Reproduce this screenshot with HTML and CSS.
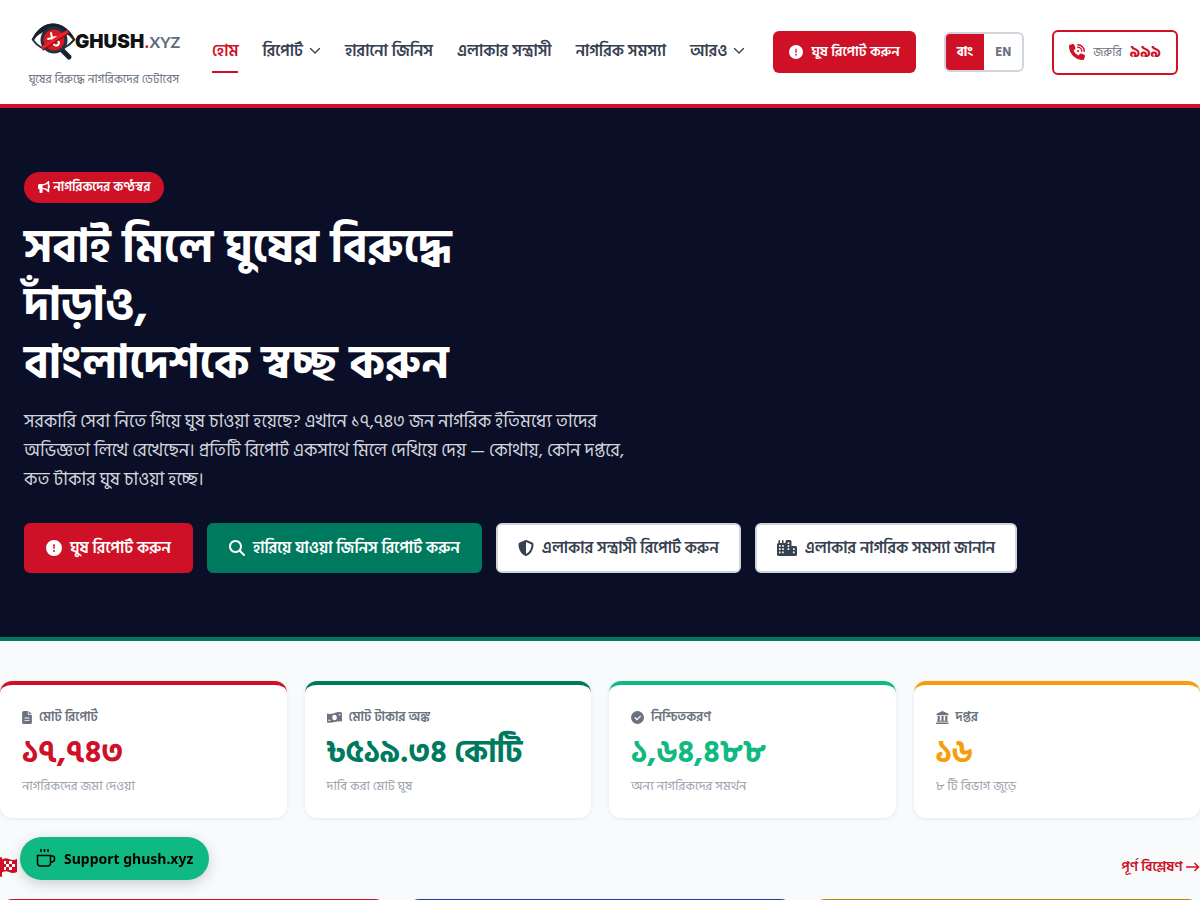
FILE: index.html
```html
<!DOCTYPE html>
<html lang="bn">

<head>
    <meta charset="UTF-8">
    <meta name="viewport" content="width=device-width, initial-scale=1">
    <title>GHUSH.XYZ</title>
    <link rel="stylesheet" href="styles.css">
</head>

<body>

    <!-- shared icons -->
    <svg class="sprite" aria-hidden="true">
        <symbol id="i-alert" viewBox="0 0 512 512">
            <path fill-rule="evenodd" d="M256 512A256 256 0 1 0 256 0a256 256 0 1 0 0 512zm0-384c13.300 0 24 10.700 24 24V264c0 13.300-10.700 24-24 24s-24-10.700-24-24V152c0-13.300 10.700-24 24-24zM224 352a32 32 0 1 1 64 0 32 32 0 1 1-64 0z" />
        </symbol>
        <symbol id="i-chevron" viewBox="0 0 12 8">
            <path d="M1.500 1.500L6 6l4.500-4.500" fill="none" stroke="currentColor" stroke-width="1.400" stroke-linecap="round" stroke-linejoin="round" />
        </symbol>
    </svg>

    <header class="header">
        <a class="brand" href="#">
            <svg class="logo" viewBox="0 0 160 50" role="img" aria-label="GHUSH.XYZ">
                <path d="M9 25C17 11 37 7 50 25C38 39 18 38 9 25z" fill="#fff" stroke="#26313d" stroke-width="2" stroke-linejoin="round" />
                <path d="M8 25C17 4 40 3 51 25C40 12 20 11 8 25z" fill="#17202b" stroke="#17202b" stroke-linejoin="round" />
                <path d="M37 34l8 8" stroke="#17202b" stroke-width="5" stroke-linecap="round" />
                <circle cx="30" cy="25" r="12" fill="#d71920" stroke="#26313d" stroke-width="3" />
                <path d="M27 18l2 9q1 5 5 3q2-2 0-4M24 24l8-2" fill="none" stroke="#fff" stroke-width="2" stroke-linecap="round" />
                <path d="M18 34L44 17" stroke="#8d1017" stroke-width="4" />
                <path d="M18 33L44 16" stroke="#e8232b" stroke-width="3" />
                <text class="logo-name" x="51" y="33">GHUSH<tspan class="logo-dot">.</tspan><tspan class="logo-xyz">XYZ</tspan></text>
            </svg>
            <span class="tagline">ঘুষের বিরুদ্ধে নাগরিকদের ডেটাবেস</span>
        </a>

        <nav class="nav">
            <a class="active" href="#">হোম</a>
            <a href="#">রিপোর্ট <svg class="chevron"><use href="#i-chevron" /></svg></a>
            <a href="#">হারানো জিনিস</a>
            <a href="#">এলাকার সন্ত্রাসী</a>
            <a href="#">নাগরিক সমস্যা</a>
            <a href="#">আরও <svg class="chevron"><use href="#i-chevron" /></svg></a>
        </nav>

        <a class="header-report" href="#"><svg class="icon14"><use href="#i-alert" /></svg>ঘুষ রিপোর্ট করুন</a>

        <div class="lang">
            <button class="on" type="button">বাং</button>
            <button type="button">EN</button>
        </div>

        <a class="emergency" href="#">
            <svg class="icon16" viewBox="0 0 512 512">
                <path d="M164.900 24.600c-7.700-18.600-28-28.500-47.400-23.200l-88 24C12.100 30.200 0 46 0 64C0 311.400 200.600 512 448 512c18 0 33.800-12.100 38.600-29.500l24-88c5.300-19.400-4.600-39.700-23.200-47.400l-96-40c-16.300-6.800-35.200-2.100-46.300 11.600L304.700 368C234.300 334.700 177.300 277.700 144 207.300L193.300 167c13.700-11.200 18.400-30 11.600-46.300l-40-96z" />
                <path d="M280 24a208 208 0 0 1 208 208M280 104a128 128 0 0 1 128 128" fill="none" stroke="currentColor" stroke-width="46" stroke-linecap="round" />
                <circle cx="290" cy="222" r="34" />
            </svg>
            <span>জরুরি</span>
            <strong>৯৯৯</strong>
        </a>
    </header>

    <section class="hero">
        <span class="badge">
            <svg class="icon12" viewBox="0 0 512 512"><path fill-rule="evenodd" d="M480 32c0-12.900-7.800-24.600-19.800-29.600s-25.700-2.200-34.900 6.900L381.700 53c-48 48-113.100 75-181 75H64c-35.300 0-64 28.700-64 64v96c0 35.300 28.700 64 64 64v128c0 17.700 14.300 32 32 32h64c17.700 0 32-14.300 32-32V352h8.700c67.900 0 133 27 181 75l43.600 43.600c9.200 9.200 22.900 11.900 34.900 6.900s19.800-16.600 19.800-29.600V300.400c18.600-8.800 32-32.500 32-60.400s-13.400-51.600-32-60.400V32zm-64 76.700V371.300C357.200 317.800 280.500 288 200.700 288H192V192h8.700c79.800 0 156.500-29.800 215.300-83.300z" /></svg>
            নাগরিকদের কণ্ঠস্বর
        </span>
        <h1>সবাই মিলে ঘুষের বিরুদ্ধে দাঁড়াও,<br>বাংলাদেশকে স্বচ্ছ করুন</h1>
        <p>সরকারি সেবা নিতে গিয়ে ঘুষ চাওয়া হয়েছে? এখানে ১৭,৭৪৩ জন নাগরিক ইতিমধ্যে তাদের অভিজ্ঞতা লিখে রেখেছেন। প্রতিটি রিপোর্ট একসাথে মিলে দেখিয়ে দেয় — কোথায়, কোন দপ্তরে, কত টাকার ঘুষ চাওয়া হচ্ছে।</p>
        <div class="actions">
            <a class="btn red" href="#"><svg class="icon16"><use href="#i-alert" /></svg>ঘুষ রিপোর্ট করুন</a>
            <a class="btn green" href="#">
                <svg class="icon16" viewBox="0 0 512 512"><path fill-rule="evenodd" d="M416 208c0 45.900-14.900 88.300-40 122.700L502.600 457.400c12.500 12.500 12.500 32.800 0 45.300s-32.800 12.500-45.300 0L330.700 376c-34.400 25.200-76.800 40-122.700 40C93.100 416 0 322.900 0 208S93.100 0 208 0S416 93.100 416 208zM208 352a144 144 0 1 0 0-288 144 144 0 1 0 0 288z" /></svg>
                হারিয়ে যাওয়া জিনিস রিপোর্ট করুন
            </a>
            <a class="btn white" href="#">
                <svg class="icon16" viewBox="0 0 512 512"><path fill-rule="evenodd" d="M256 0c4.600 0 9.200 1 13.400 2.900L457.700 82.800c22 9.300 38.400 31 38.300 57.200c-.5 99.200-41.300 280.700-213.600 363.200c-16.700 8-36.100 8-52.800 0C57.300 420.700 16.500 239.200 16 140c-.1-26.200 16.300-47.900 38.300-57.200L242.700 2.900C246.800 1 251.400 0 256 0zm0 66.800V444.800C394 378 431.100 230.100 432 141.400L256 66.800z" /></svg>
                এলাকার সন্ত্রাসী রিপোর্ট করুন
            </a>
            <a class="btn white" href="#">
                <svg class="icon-city" viewBox="0 0 640 512"><path fill-rule="evenodd" d="M48 24a24 24 0 0 1 48 0v72h64V24a24 24 0 0 1 48 0v72h64V48a48 48 0 0 1 48-48h96a48 48 0 0 1 48 48v144h128a48 48 0 0 1 48 48v224a48 48 0 0 1-48 48H48a48 48 0 0 1-48-48V144a48 48 0 0 1 48-48zM64 160v56h52v-56zM164 160v56h52v-56zM64 264v56h52v-56zM164 264v56h52v-56zM64 368v56h52v-56zM164 368v56h52v-56zM340 72v56h52v-56zM340 168v56h52v-56zM340 264v56h52v-56zM512 264v56h52v-56zM512 368v56h52v-56z" /></svg>
                এলাকার নাগরিক সমস্যা জানান
            </a>
        </div>
    </section>

    <main>
        <section class="stats">
            <div class="stat red-stat">
                <div class="label"><svg class="icon-file" viewBox="0 0 384 512"><path fill-rule="evenodd" d="M64 0C28.700 0 0 28.700 0 64V448c0 35.300 28.700 64 64 64H320c35.300 0 64-28.700 64-64V160H256c-17.700 0-32-14.300-32-32V0H64zM256 0V128H384zM96 256v36h192v-36zM96 352v36h192v-36z" /></svg>মোট রিপোর্ট</div>
                <div class="number">১৭,৭৪৩</div>
                <div class="note">নাগরিকদের জমা দেওয়া</div>
            </div>
            <div class="stat green-stat">
                <div class="label"><svg class="icon-money" viewBox="0 0 30 24"><path fill-rule="evenodd" d="M0 4Q7 6 15 3T30 2V20Q23 19 15 21T0 22zM15 6.500a4.500 5.500 0 1 0 0 11a4.500 5.500 0 1 0 0-11zM3 16v3q3 0 4-1q-1-2-4-2zM27 8V5q-3 0-4 1q1 2 4 2z" /></svg>মোট টাকার অঙ্ক</div>
                <div class="number">৳৫১৯.৩৪ কোটি</div>
                <div class="note">দাবি করা মোট ঘুষ</div>
            </div>
            <div class="stat mint-stat">
                <div class="label"><svg class="icon13" viewBox="0 0 24 24"><circle cx="12" cy="12" r="12" /><path d="M7 12l4 4 7-7" fill="none" stroke="#fff" stroke-width="2.500" /></svg>নিশ্চিতকরণ</div>
                <div class="number">১,৬৪,৪৮৮</div>
                <div class="note">অন্য নাগরিকদের সমর্থন</div>
            </div>
            <div class="stat gold-stat">
                <div class="label"><svg class="icon13" viewBox="0 0 24 24"><path d="M12 0l11 5v3H1V5zM3 9h4v9h3V9h4v9h3V9h4v9h1v2H2v-2h1zM1 21h22v3H0v-2z" /></svg>দপ্তর</div>
                <div class="number">১৬</div>
                <div class="note">৮ টি বিভাগ জুড়ে</div>
            </div>
        </section>

        <section class="analysis">
            <div class="analysis-head">
                <svg class="flag" viewBox="0 0 18 20">
                    <path d="M1 1v18" stroke="currentColor" stroke-width="2" stroke-linecap="round" />
                    <path d="M1 3q4-3 8-1t8 0v13q-4 2-8 0t-8 1z" />
                    <path d="M4 4h2v3H4zM9 4h3v3H9zM6 7h3v3H6zM12 7h3v3h-3zM4 10h2v3H4zM9 10h3v3H9z" fill="#fff" />
                </svg>
                <a href="#">পূর্ণ বিশ্লেষণ <svg class="arrow" viewBox="0 0 14 12"><path d="M0 6h12.500M8.500 2l4 4-4 4" fill="none" stroke="currentColor" stroke-width="1.500" /></svg></a>
            </div>
            <div class="panels">
                <div class="panel panel-red"></div>
                <div class="panel panel-blue"></div>
                <div class="panel panel-gold"></div>
            </div>
        </section>
    </main>

    <a class="support" href="#">
        <svg class="cup" viewBox="0 0 20 20"><path d="M1.500 6.500h13V14a3 3 0 0 1-3 3h-7a3 3 0 0 1-3-3zM14.500 7h2a2 2 0 0 1 2 2v1a3 3 0 0 1-3 3h-1M5 0v3M8.500 0v3M12 0v3" fill="none" stroke="currentColor" stroke-width="1.500" /></svg>
        Support ghush.xyz
    </a>

</body>

</html>
```
FILE: styles.css
```css
* {
    box-sizing: border-box;
    margin: 0;
    padding: 0;
}

body {
    background: #f9fafb;
    color: #374151;
    font-family: "Hind Siliguri", "Noto Sans Bengali", sans-serif;
    font-size: 16px;
    line-height: 1.6;
}

a {
    color: inherit;
    text-decoration: none;
}

svg {
    fill: currentColor;
    flex: none;
}

.sprite {
    position: absolute;
    width: 0;
    height: 0;
}

.icon12 {
    width: 12px;
    height: 12px;
}

.icon13 {
    width: 13px;
    height: 13px;
}

.icon14 {
    width: 14px;
    height: 14px;
}

.icon16 {
    width: 16px;
    height: 16px;
}

/* header */
.header {
    display: flex;
    align-items: center;
    justify-content: space-between;
    height: 108px;
    padding: 0 22px 0 24px;
    background: #fff;
    border-bottom: 4px solid #ce1126;
}

.brand {
    display: flex;
    flex-direction: column;
    align-items: center;
    gap: 6px;
}

.logo {
    width: 160px;
    height: 50px;
}

.logo-name {
    fill: #111;
    font-family: Inter, sans-serif;
    font-size: 19px;
    font-weight: 900;
}

.logo-dot {
    fill: #d71920;
    font-size: 14px;
}

.logo-xyz {
    fill: #5f6b78;
    font-family: Lato, sans-serif;
    font-size: 16px;
    font-weight: 700;
}

.tagline {
    color: #6b7280;
    font-size: 12px;
    line-height: 18px;
}

.nav {
    display: flex;
    gap: 24px;
}

.nav a {
    display: flex;
    align-items: center;
    gap: 6px;
    padding: 8px 0;
    border-bottom: 2px solid transparent;
    font-size: 16px;
    font-weight: 600;
    line-height: 24px;
    white-space: nowrap;
}

.nav .active {
    color: #ce1126;
    border-color: #ce1126;
}

.chevron {
    width: 12px;
    height: 8px;
}

.header-report {
    display: flex;
    align-items: center;
    gap: 8px;
    padding: 10px 16px;
    background: #ce1126;
    border-radius: 6px;
    color: #fff;
    font-size: 14px;
    font-weight: 600;
    line-height: 22px;
    white-space: nowrap;
}

.lang {
    display: flex;
    overflow: hidden;
    border: 2px solid #d1d5db;
    border-radius: 6px;
}

.lang button {
    padding: 8px 11px;
    background: #fff;
    border: 0;
    color: #6b7280;
    font-family: inherit;
    font-size: 13px;
    font-weight: 700;
    line-height: 20px;
}

.lang .on {
    background: #ce1126;
    color: #fff;
}

.emergency {
    display: flex;
    align-items: center;
    gap: 8px;
    padding: 8px 15px;
    border: 2px solid #ce1126;
    border-radius: 6px;
    color: #ce1126;
    line-height: 25px;
}

.emergency span {
    color: #6b7280;
    font-size: 12px;
}

.emergency strong {
    font-size: 16px;
    font-weight: 700;
}

/* hero */
.hero {
    padding: 64px 24px;
    background: #0a0e27;
    border-bottom: 4px solid #007a5e;
    color: #fff;
}

.badge {
    display: block;
    width: fit-content;
    padding: 5px 14px;
    background: #ce1126;
    border-radius: 20px;
    font-size: 13px;
    font-weight: 600;
    line-height: 21px;
}

.badge svg {
    vertical-align: -2px;
}

.hero h1 {
    max-width: 520px;
    margin-top: 16px;
    font-size: 46px;
    font-weight: 700;
    line-height: 58px;
}

.hero p {
    max-width: 620px;
    margin: 14px 0 29px;
    color: #d1d5db;
    font-size: 18px;
    line-height: 29px;
}

.actions {
    display: flex;
    flex-wrap: wrap;
    gap: 14px;
}

.btn {
    display: flex;
    align-items: center;
    gap: 8px;
    padding: 11px 20px;
    border: 2px solid transparent;
    border-radius: 6px;
    font-size: 16px;
    font-weight: 600;
    line-height: 24px;
}

.red {
    background: #ce1126;
    border-color: #ce1126;
}

.green {
    background: #007a5e;
    border-color: #007a5e;
}

.white {
    background: #fff;
    border-color: #d1d5db;
    color: #374151;
}

.icon-city {
    width: 20px;
    height: 16px;
}

/* stats */
.stats {
    display: grid;
    grid-template-columns: repeat(4, 1fr);
    gap: 18px;
    padding-top: 40px;
}

.stat {
    padding: 21px 22px;
    background: #fff;
    border-top: 4px solid;
    border-radius: 12px;
    box-shadow: 0 1px 4px rgba(0, 0, 0, 0.08);
}

.label {
    display: flex;
    align-items: center;
    gap: 7px;
    color: #6b7280;
    font-size: 13px;
    font-weight: 600;
    line-height: 22px;
}

.icon-file {
    width: 10px;
    height: 13px;
}

.icon-money {
    width: 15px;
    height: 13px;
}

.number {
    margin: 4px 0 2px;
    font-size: 31px;
    font-weight: 700;
    line-height: 42px;
}

.note {
    color: #9ca3af;
    font-size: 13px;
    line-height: 21px;
}

.red-stat {
    border-color: #ce1126;
    color: #ce1126;
}

.green-stat {
    border-color: #007a5e;
    color: #007a5e;
}

.mint-stat {
    border-color: #10b981;
    color: #10b981;
}

.gold-stat {
    border-color: #f59e0b;
    color: #f59e0b;
}

/* analysis */
.analysis {
    padding-top: 36px;
}

.analysis-head {
    display: flex;
    align-items: center;
    justify-content: space-between;
    margin-bottom: 20px;
    color: #ce1126;
    font-size: 14px;
    font-weight: 600;
    line-height: 25px;
}

.flag {
    width: 18px;
    height: 20px;
}

.arrow {
    width: 14px;
    height: 12px;
    vertical-align: -2px;
}

.panels {
    display: grid;
    grid-template-columns: repeat(3, 1fr);
    gap: 20px;
}

.panel {
    min-height: 120px;
    background: #fff;
    border-top: 4px solid;
    border-radius: 12px;
}

.panel-red {
    border-color: #ce1126;
}

.panel-blue {
    border-color: #1e40af;
}

.panel-gold {
    border-color: #b8860b;
}

.support {
    position: fixed;
    left: 20px;
    bottom: 20px;
    display: flex;
    align-items: center;
    gap: 8px;
    padding: 10px 16px;
    background: #10b981;
    border-radius: 24px;
    box-shadow: 0 4px 14px rgba(0, 0, 0, 0.18);
    color: #000;
    font-family: "Noto Sans", sans-serif;
    font-size: 14px;
    font-weight: 700;
    line-height: 23px;
}

.cup {
    width: 20px;
    height: 20px;
}
```
